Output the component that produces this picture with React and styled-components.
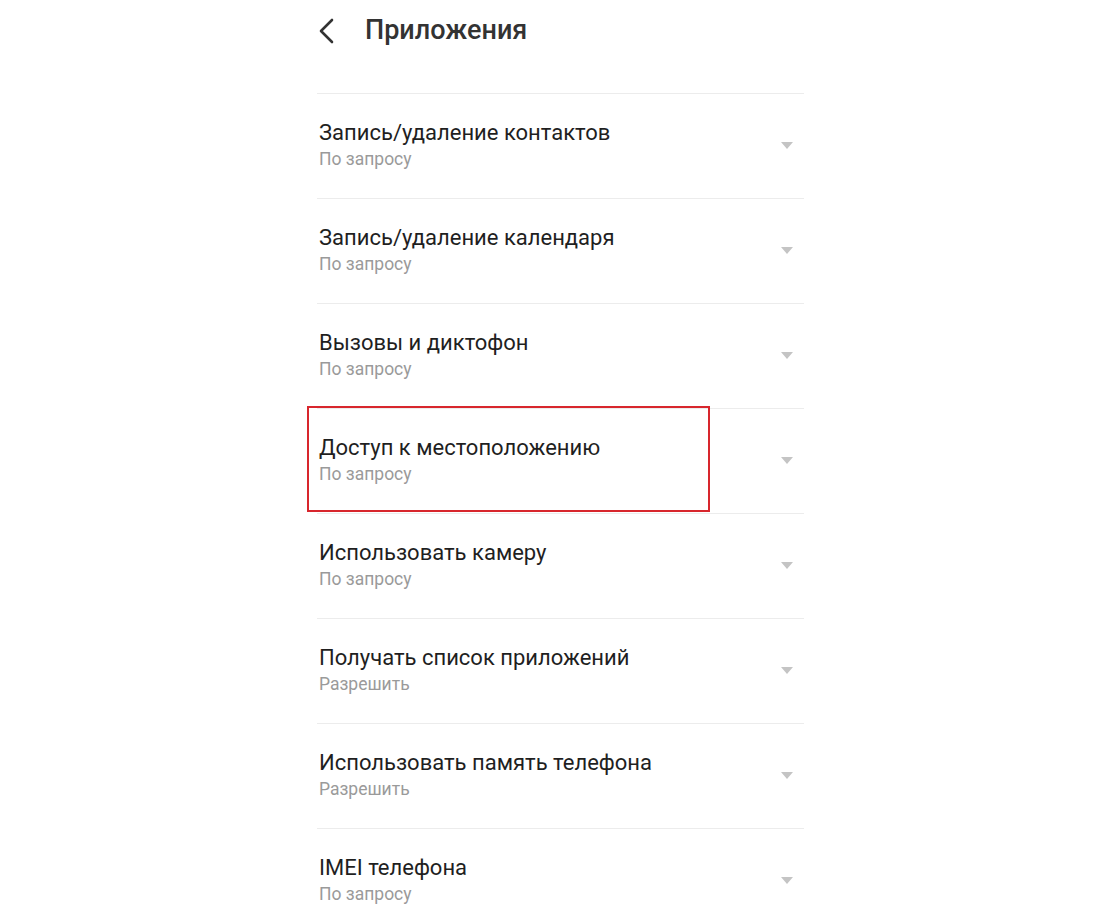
import React from "react";
import styled, { createGlobalStyle } from "styled-components";

const Global = createGlobalStyle`
  html, body { margin: 0; padding: 0; background: #fff; overflow: hidden; }
  body { font-family: Roboto, "Noto Sans", "Liberation Sans", sans-serif; }
`;

const Page = styled.div`
  width: 487px;
  margin-left: 317px;
`;

const Header = styled.header`
  height: 93px;
  display: flex;
  align-items: flex-start;
  padding-top: 15px;
  box-sizing: border-box;
  gap: 27px;
`;

const BackButton = styled.button`
  border: none;
  background: none;
  padding: 0;
  margin: 0 0 0 1px;
  width: 20px;
  height: 31px;
  display: flex;
  align-items: center;
  cursor: pointer;
`;

const Title = styled.h1`
  margin: 0;
  font-size: 27px;
  font-weight: 500;
  color: #333;
  line-height: 31px;
`;

const List = styled.ul`
  list-style: none;
  margin: 0;
  padding: 0;
`;

const Row = styled.li`
  position: relative;
  height: 105px;
  border-top: 1px solid #ececec;
  display: flex;
  align-items: center;
  justify-content: space-between;
  padding-left: 2px;
  padding-right: 11px;
  box-sizing: border-box;
`;

const Texts = styled.div`
  display: flex;
  flex-direction: column;
  gap: 3px;
  margin-top: -2px;
`;

const ItemTitle = styled.div`
  font-size: 22px;
  color: #1f1f1f;
  line-height: 26px;
`;

const ItemSub = styled.div`
  font-size: 17.5px;
  color: #9a9a9a;
  line-height: 21px;
`;

const Caret = styled.span`
  width: 0;
  height: 0;
  border-left: 6px solid transparent;
  border-right: 6px solid transparent;
  border-top: 7px solid #c4c4c4;
  margin-top: -2px;
`;

const Highlight = styled.div`
  position: absolute;
  left: -10px;
  top: -3px;
  width: 403px;
  height: 106px;
  border: 2px solid #d8262d;
  box-sizing: border-box;
  pointer-events: none;
`;

const items = [
  ["Запись/удаление контактов", "По запросу"],
  ["Запись/удаление календаря", "По запросу"],
  ["Вызовы и диктофон", "По запросу"],
  ["Доступ к местоположению", "По запросу", true],
  ["Использовать камеру", "По запросу"],
  ["Получать список приложений", "Разрешить"],
  ["Использовать память телефона", "Разрешить"],
  ["IMEI телефона", "По запросу"],
];

export default function App() {
  return (
    <>
      <Global />
      <Page>
        <Header>
          <BackButton aria-label="Назад">
            <svg width="18" height="26" viewBox="0 0 18 26">
              <path d="M14 2 L3 13 L14 24" fill="none" stroke="#333" strokeWidth="2.6" strokeLinecap="round" strokeLinejoin="round" />
            </svg>
          </BackButton>
          <Title>Приложения</Title>
        </Header>
        <List>
          {items.map(([t, s, hl]) => (
            <Row key={t}>
              <Texts>
                <ItemTitle>{t}</ItemTitle>
                <ItemSub>{s}</ItemSub>
              </Texts>
              <Caret />
              {hl && <Highlight />}
            </Row>
          ))}
        </List>
      </Page>
    </>
  );
}
